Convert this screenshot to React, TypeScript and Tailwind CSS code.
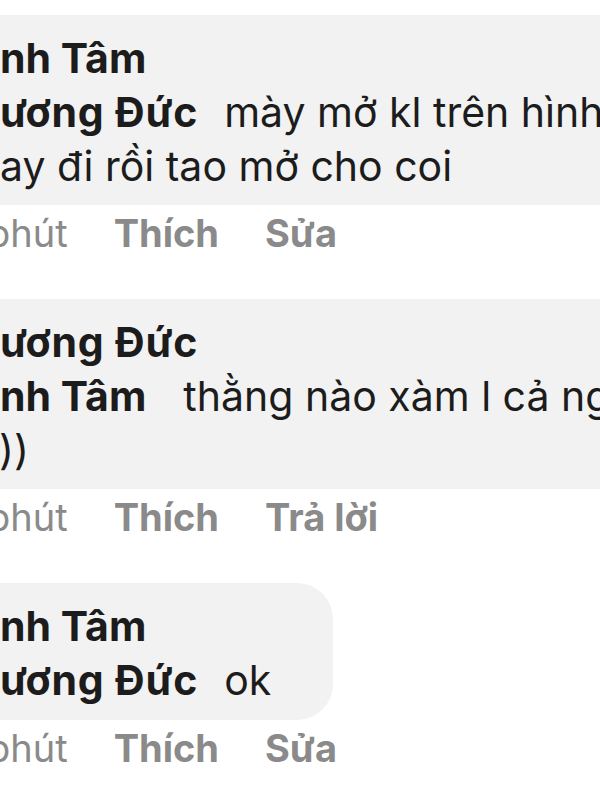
import React from "react";

export default function App() {
  return (
    <div className="w-[600px] h-[800px] overflow-hidden bg-white font-['Inter','Liberation_Sans',sans-serif] text-[#1c1c1c]">
      <div className="pt-[15px] flex flex-col">
        {/* Comment 1 */}
        <div className="w-[720px] bg-[#f2f2f2] pt-[16px] pb-[12px] text-[41px] leading-[54px] whitespace-nowrap">
          <div className="font-bold">nh Tâm</div>
          <div className="flex">
            <span className="font-bold tracking-[0.8px]">ương Đức</span>
            <span className="ml-[26px]">mày mở kl trên hình ảnh</span>
          </div>
          <div>ay đi rồi tao mở cho coi</div>
        </div>
        <div className="mt-[3px] flex items-baseline gap-[46px] text-[38px] leading-[50px] text-[#8a8a8a] whitespace-nowrap">
          <span className="-ml-[13px]">phút</span>
          <span className="font-bold">Thích</span>
          <span className="font-bold">Sửa</span>
        </div>

        {/* Comment 2 */}
        <div className="mt-[41px] w-[720px] bg-[#f2f2f2] pt-[16px] pb-[12px] text-[41px] leading-[54px] whitespace-nowrap">
          <div className="font-bold tracking-[0.8px]">ương Đức</div>
          <div className="flex">
            <span className="font-bold">nh Tâm</span>
            <span className="ml-[37px]">thằng nào xàm l cả ngày</span>
          </div>
          <div className="-ml-[16px]">)))</div>
        </div>
        <div className="mt-[3px] flex items-baseline gap-[46px] text-[38px] leading-[50px] text-[#8a8a8a] whitespace-nowrap">
          <span className="-ml-[13px]">phút</span>
          <span className="font-bold">Thích</span>
          <span className="font-bold">Trả lời</span>
        </div>

        {/* Comment 3 */}
        <div className="mt-[41px] w-[333px] rounded-r-[36px] bg-[#f2f2f2] pt-[16px] pb-[13px] text-[41px] leading-[54px] whitespace-nowrap">
          <div className="font-bold">nh Tâm</div>
          <div className="flex">
            <span className="font-bold tracking-[0.8px]">ương Đức</span>
            <span className="ml-[26px]">ok</span>
          </div>
        </div>
        <div className="mt-[3px] flex items-baseline gap-[46px] text-[38px] leading-[50px] text-[#8a8a8a] whitespace-nowrap">
          <span className="-ml-[13px]">phút</span>
          <span className="font-bold">Thích</span>
          <span className="font-bold">Sửa</span>
        </div>
      </div>
    </div>
  );
}
